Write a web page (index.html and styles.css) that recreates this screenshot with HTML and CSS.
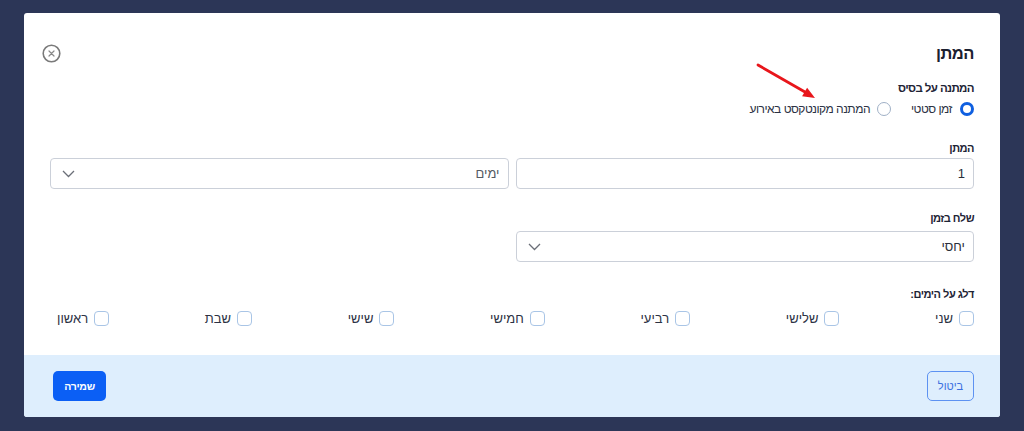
FILE: index.html
```html
<!DOCTYPE html>
<html lang="he">
<head>
<meta charset="utf-8">
<link rel="stylesheet" href="styles.css">
</head>
<body>
<div class="backdrop">
  <div class="modal" dir="rtl">
    <div class="modal-body">
      <div class="header">
        <h1 class="title">המתן</h1>
        <button class="close" aria-label="סגור">
          <svg width="19" height="19" viewBox="0 0 19 19"><circle cx="9.5" cy="9.5" r="8.3" fill="none" stroke="#7a7a7a" stroke-width="1.6"/><path d="M7 7l5 5M12 7l-5 5" stroke="#8a8a8a" stroke-width="1.2" stroke-linecap="round"/></svg>
        </button>
      </div>

      <div class="label label-base">המתנה על בסיס</div>
      <div class="radios">
        <label class="radio"><span class="dot dot-on"></span><span>זמן סטטי</span></label>
        <label class="radio"><span class="dot"></span><span>המתנה מקונטקסט באירוע</span></label>
      </div>

      <div class="label label-wait">המתן</div>
      <div class="grid">
        <div class="field"><span class="value">1</span></div>
        <div class="field select"><span class="value muted">ימים</span>
          <svg class="chev" width="13" height="8" viewBox="0 0 13 8"><path d="M1 1l5.5 5.5L12 1" fill="none" stroke="#6b6f78" stroke-width="1.3"/></svg>
        </div>
      </div>

      <div class="label label-send">שלח בזמן</div>
      <div class="grid">
        <div class="field select"><span class="value">יחסי</span>
          <svg class="chev" width="13" height="8" viewBox="0 0 13 8"><path d="M1 1l5.5 5.5L12 1" fill="none" stroke="#6b6f78" stroke-width="1.3"/></svg>
        </div>
      </div>

      <div class="label label-skip">דלג על הימים:</div>
      <div class="days">
        <label class="day"><span class="box"></span><span>שני</span></label>
        <label class="day"><span class="box"></span><span>שלישי</span></label>
        <label class="day"><span class="box"></span><span>רביעי</span></label>
        <label class="day"><span class="box"></span><span>חמישי</span></label>
        <label class="day"><span class="box"></span><span>שישי</span></label>
        <label class="day"><span class="box"></span><span>שבת</span></label>
        <label class="day"><span class="box"></span><span>ראשון</span></label>
      </div>
    </div>

    <div class="footer">
      <button class="btn btn-cancel">ביטול</button>
      <button class="btn btn-save">שמירה</button>
    </div>

    <svg class="arrow" width="70" height="45" viewBox="0 0 70 45">
      <line x1="4" y1="4" x2="51" y2="31" stroke="#e8161b" stroke-width="2.8" stroke-linecap="round"/>
      <polygon points="61,37 48.1,35.3 53.1,26.7" fill="#e8161b"/>
    </svg>
  </div>
</div>
</body>
</html>
```

FILE: styles.css
```css
html, body {
  margin: 0;
  padding: 0;
  background: #2c3657;
}
body {
  font-family: "Liberation Sans", Arial, sans-serif;
  color: #1d2335;
}
.backdrop {
  padding: 13px 24px 14px;
}
.modal {
  position: relative;
  background: #ffffff;
  border-radius: 3px;
  overflow: hidden;
  height: 404px;
  display: flex;
  flex-direction: column;
}
.modal-body {
  flex: 1;
  padding: 30px 26px 0;
}
.header {
  display: flex;
  justify-content: space-between;
  align-items: center;
  height: 20px;
}
.title {
  margin: 0;
  font-size: 16.5px;
  letter-spacing: -0.5px;
  font-weight: 700;
  line-height: 20px;
  color: #1b2030;
}
.close {
  border: 0;
  background: none;
  padding: 0;
  margin-left: -8px;
  width: 19px;
  height: 19px;
  display: flex;
}
.label {
  font-size: 11px;
  letter-spacing: -0.5px;
  font-weight: 700;
  line-height: 16px;
  color: #1e2436;
}
.label-base { margin-top: 17px; font-size: 11.5px; letter-spacing: -0.6px; }
.label-wait { margin-top: 22px; }
.label-send { margin-top: 21px; }
.label-skip { margin-top: 24px; }

.radios {
  display: flex;
  align-items: center;
  gap: 20px;
  margin-top: 4px;
  height: 18px;
}
.radio {
  display: flex;
  align-items: center;
  gap: 8px;
  font-size: 12px;
  letter-spacing: -0.5px;
  color: #2c3244;
}
.radio + .radio { gap: 7px; }
.dot {
  box-sizing: border-box;
  width: 14px;
  height: 14px;
  border-radius: 50%;
  border: 1px solid #9fb0c6;
  background: #fff;
}
.dot-on {
  border: 3.5px solid #0f5fe0;
}

.grid {
  display: grid;
  grid-template-columns: 1fr 1fr;
  gap: 7px;
}
.label-wait + .grid { margin-top: 2px; }
.label-send + .grid { margin-top: 5px; }
.field {
  box-sizing: border-box;
  height: 31px;
  border: 1px solid #cbd0d9;
  border-radius: 4px;
  display: flex;
  align-items: center;
  justify-content: space-between;
  padding: 0 8px 0 11px;
  font-size: 13px;
  color: #2a2f3a;
}
.muted { color: #555a63; }
.chev { display: block; }

.days {
  display: flex;
  justify-content: space-between;
  align-items: center;
  margin-top: 7px;
  height: 18px;
  padding-left: 7px;
}
.day {
  display: flex;
  align-items: center;
  gap: 6px;
  font-size: 13px;
  color: #2c3244;
}
.box {
  box-sizing: border-box;
  width: 15px;
  height: 15px;
  border: 1.5px solid #a9c5e6;
  border-radius: 4px;
  background: #fff;
}

.footer {
  background: #deeefd;
  height: 62px;
  box-sizing: border-box;
  padding: 16px 26px 16px 29px;
  display: flex;
  justify-content: space-between;
  align-items: center;
}
.btn {
  height: 30px;
  border-radius: 5px;
  font-family: "Liberation Sans", Arial, sans-serif;
  font-size: 11px;
  font-weight: 700;
  padding: 0;
  cursor: pointer;
}
.btn-cancel {
  width: 47px;
  background: transparent;
  border: 1px solid #5d92f2;
  color: #3b6fe0;
  font-weight: 400;
}
.btn-save {
  width: 53px;
  background: #0b5ff5;
  border: 0;
  color: #ffffff;
  font-size: 10.5px;
  letter-spacing: -0.3px;
}

.arrow {
  position: absolute;
  left: 730px;
  top: 48px;
}
```
